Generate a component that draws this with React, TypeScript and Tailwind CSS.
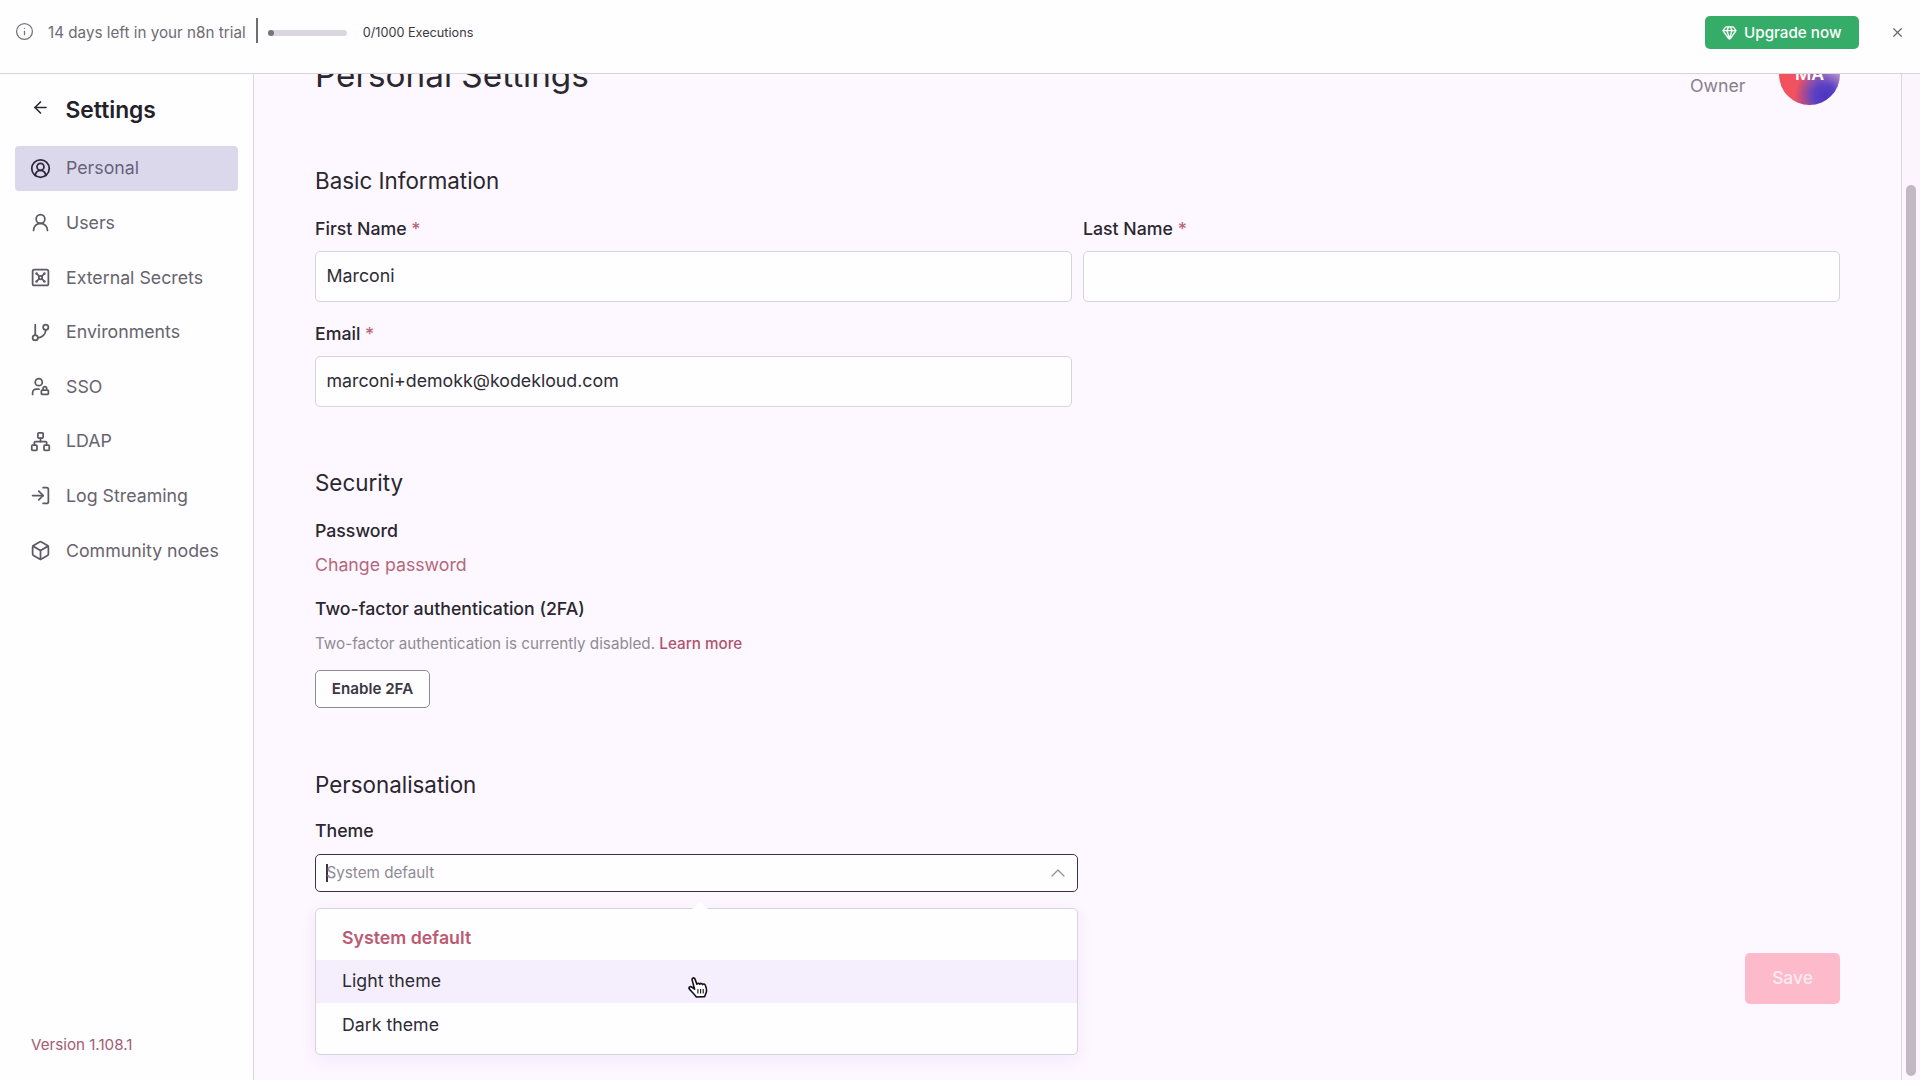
import { useState } from "react";
import {
  ArrowLeft,
  Box,
  CircleUserRound,
  Gem,
  GitBranch,
  Info,
  LogIn,
  Network,
  UserRound,
  Vault,
  X,
  type LucideIcon,
} from "lucide-react";
import clsx from "clsx";

type NavItem = {
  label: string;
  icon: LucideIcon | typeof UserLockIcon;
};

function UserLockIcon({ className }: { className?: string }) {
  return (
    <svg
      viewBox="0 0 24 24"
      fill="none"
      stroke="currentColor"
      strokeWidth={2}
      strokeLinecap="round"
      strokeLinejoin="round"
      className={className}
    >
      <circle cx="10" cy="7" r="4" />
      <path d="M10.3 15H7a4 4 0 0 0-4 4v2" />
      <path d="M15 15.5V14a2 2 0 0 1 4 0v1.5" />
      <rect width="8" height="5" x="13" y="16" rx=".899" />
    </svg>
  );
}

function HandCursor({ className }: { className?: string }) {
  return (
    <svg viewBox="0 0 20 22" className={className}>
      <path
        d="M6.6 13.2 L4.2 4.1 C3.7 1.9 6.2 1 7 3.1 L8.9 8.2 C9.4 6.9 11.2 7 11.6 8.2 C12.4 7 14.1 7.2 14.5 8.6 C15.4 7.6 17 8 17.4 9.4 C18.3 12 19.4 14.6 18 17 L16.6 20.6 L8.4 21 C6.6 18.4 3.6 15.6 1.4 13.1 C0.2 11.4 2 10 3.6 11 Z"
        fill="#fff"
        stroke="#15101c"
        strokeWidth="1.6"
        strokeLinejoin="round"
      />
      <path
        d="M9.9 13v4.4M12.6 13v4.4M15.2 13v4.4"
        stroke="#15101c"
        strokeWidth="1.1"
      />
    </svg>
  );
}

const navItems: NavItem[] = [
  { label: "Personal", icon: CircleUserRound },
  { label: "Users", icon: UserRound },
  { label: "External Secrets", icon: Vault },
  { label: "Environments", icon: GitBranch },
  { label: "SSO", icon: UserLockIcon },
  { label: "LDAP", icon: Network },
  { label: "Log Streaming", icon: LogIn },
  { label: "Community nodes", icon: Box },
];

const themes = ["System default", "Light theme", "Dark theme"];

function TrialBanner() {
  return (
    <header className="flex h-[74px] shrink-0 items-start border-b border-[#d9d3dc] bg-[#fefdff] pl-[14.5px] pr-[15px]">
      <div className="flex h-[65px] items-center">
        <Info
          className="-mt-0.5 size-[19px] text-[#757279]"
          strokeWidth={1.6}
        />
        <span className="mt-px ml-[14.5px] text-[15.22px] text-[#6f6c73]">
          14 days left in your n8n trial
        </span>
        <div className="ml-[10px] -mt-1 h-[25px] w-[2px] bg-[#6f6c73]" />
        <div className="ml-[10.5px] h-[6px] w-[79px] rounded-full bg-[#dad7e1]">
          <div className="size-[6px] rounded-full bg-[#77747c]" />
        </div>
        <span className="mt-px ml-[15.5px] text-[12.7px] text-[#3b383f]">
          0/1000 Executions
        </span>
      </div>

      <div className="ml-auto flex h-[65px] items-center">
        <button className="flex h-[33px] w-[154px] items-center rounded-[5px] bg-[#35ad68] pl-[17px] text-[15.2px] font-medium text-white">
          <Gem className="mr-[7px] size-[15px]" strokeWidth={2.2} />
          <span className="mt-px">Upgrade now</span>
        </button>
        <X className="ml-[31px] size-[15px] text-[#6b6870]" strokeWidth={2} />
      </div>
    </header>
  );
}

function Sidebar() {
  const [active] = useState("Personal");

  return (
    <aside className="flex w-[254px] shrink-0 flex-col border-r border-[#dcd6e2] bg-[#fefdff]">
      <div className="mt-[20px] flex h-[32px] items-center pl-[31px]">
        <ArrowLeft
          className="-mt-[5px] size-[19px] text-[#2b2830]"
          strokeWidth={2}
        />
        <h1 className="ml-[15.5px] text-[22.8px] font-semibold text-[#242129]">
          Settings
        </h1>
      </div>

      <nav className="mt-[20px] flex flex-col gap-[10px] px-[15px]">
        {navItems.map(({ label, icon: Icon }) => (
          <a
            key={label}
            className={clsx(
              "flex h-[44.6px] items-center rounded-[4px] pl-[15px]",
              active === label && "bg-[#dcd8ec]"
            )}
          >
            <Icon
              className={clsx(
                "size-[21px]",
                active === label ? "text-[#2c283a]" : "text-[#5d5a61]"
              )}
              strokeWidth={2}
            />
            <span
              className={clsx(
                "mt-px ml-[15px] text-[17.75px]",
                active === label ? "text-[#67637a]" : "text-[#67646b]"
              )}
            >
              {label}
            </span>
          </a>
        ))}
      </nav>

      <a className="mt-auto mb-[25.5px] pl-[31px] text-[15.17px] leading-[20px] text-[#a35c70]">
        Version 1.108.1
      </a>
    </aside>
  );
}

function Label({ text, required }: { text: string; required?: boolean }) {
  return (
    <label className="block text-[17.72px] leading-[20px] font-medium text-[#2a272f]">
      {text}
      {required && <span className="text-[#b9647a]"> *</span>}
    </label>
  );
}

function Field({ label, value }: { label: string; value: string }) {
  return (
    <div className="w-[757px]">
      <Label text={label} required />
      <div className="mt-[12.5px] flex h-[50.5px] items-center rounded-[5px] border border-[#d8d2dd] bg-[#fefdff] pt-px pl-[10.5px] text-[17.77px] text-[#2f2c34]">
        {value}
      </div>
    </div>
  );
}

function SectionTitle({ children }: { children: string }) {
  return (
    <h2 className="text-[22.4px] leading-[28px] text-[#2a272f]">{children}</h2>
  );
}

function ThemeSelect() {
  const [selected] = useState("System default");
  const [hovered] = useState("Light theme");

  return (
    <div className="relative mt-[13px] w-[763px]">
      <div className="flex h-[38px] items-center rounded-[5px] border-[1.5px] border-[#3a3448] bg-[#fefdff] pr-[12px] pl-[10px]">
        <div className="h-[18px] w-[1.5px] bg-[#3a3640]" />
        <span className="-ml-px text-[15.22px] text-[#8f8b93]">{selected}</span>
        <svg
          viewBox="0 0 14 8"
          className="ml-auto h-[8px] w-[14px]"
          fill="none"
          stroke="#929097"
          strokeWidth="1.3"
          strokeLinecap="round"
          strokeLinejoin="round"
        >
          <path d="M1 7 L7 1 L13 7" />
        </svg>
      </div>

      {/* Dropdown */}
      <div className="absolute top-[53.5px] left-0 z-10 h-[147px] w-[763px] rounded-[5px] border border-[#d9d3df] bg-[#fefdff] pt-[8.5px] shadow-[0_4px_16px_rgba(110,60,190,0.08)]">
        <svg
          viewBox="0 0 18 9"
          className="absolute -top-[8px] left-[375px] h-[9px] w-[18px]"
        >
          <path d="M0 9 L8 1.4 Q9 .6 10 1.4 L18 9 Z" fill="#fefdff" />
        </svg>
        <ul>
          {themes.map((theme) => (
            <li
              key={theme}
              className={clsx(
                "flex h-[43.2px] items-center pl-[26px] text-[17.75px]",
                theme === selected
                  ? "font-semibold text-[#bb5a70]"
                  : "text-[#2f2c34]",
                theme === hovered && "bg-[#f5effd]"
              )}
            >
              {theme}
            </li>
          ))}
        </ul>
        <HandCursor className="absolute top-[67px] left-[372px] h-[22px] w-[20px]" />
      </div>
    </div>
  );
}

function PersonalSettings() {
  return (
    <main className="min-w-0 flex-1 overflow-hidden bg-[#fdf7ff] pr-[61px] pl-[61px]">
      {/* Scrolled partly under the banner */}
      <div className="-mt-[30px] flex h-[61px] items-center">
        <h1 className="text-[33.3px] leading-[40px] text-[#2a272f]">
          Personal Settings
        </h1>
        <span className="mt-[22.5px] ml-auto text-[17.75px] leading-[20px] text-[#858189]">
          Owner
        </span>
        <div className="ml-[33.5px] flex size-[61px] items-center justify-center rounded-full bg-[radial-gradient(circle_at_76%_86%,#4b35c0_0%,#5a40c4_16%,transparent_44%),linear-gradient(75deg,#f4505a_0%,#ee5462_38%,#b872a8_60%,#d0a8cc_78%,#d8b4cc_100%)] text-[17.65px] font-semibold text-white">
          MA
        </div>
      </div>

      {/* Basic Information */}
      <section className="mt-[62px]">
        <SectionTitle>Basic Information</SectionTitle>
        <div className="mt-[23.5px] grid grid-cols-[757px_757px] gap-x-[11px] gap-y-[22px]">
          <Field label="First Name" value="Marconi" />
          <Field label="Last Name" value="" />
          <Field label="Email" value="marconi+demokk@kodekloud.com" />
        </div>
      </section>

      {/* Security */}
      <section className="mt-[62.5px]">
        <SectionTitle>Security</SectionTitle>
        <div className="mt-[24px]">
          <Label text="Password" />
        </div>
        <a className="mt-[14px] block text-[17.72px] leading-[20px] text-[#b5687c]">
          Change password
        </a>
        <div className="mt-[24px]">
          <Label text="Two-factor authentication (2FA)" />
        </div>
        <p className="mt-[14.5px] text-[15.23px] leading-[20px] text-[#8f8b93]">
          Two-factor authentication is currently disabled.{" "}
          <a className="font-medium text-[#ad556c]">Learn more</a>
        </p>
        <button className="mt-[16px] flex h-[38px] w-[115px] items-center justify-center rounded-[5px] border border-[#8e8b93] bg-[#fefdff] pt-px text-[15.17px] font-semibold text-[#3a373f]">
          Enable 2FA
        </button>
      </section>

      {/* Personalisation */}
      <section className="mt-[63px]">
        <SectionTitle>Personalisation</SectionTitle>
        <div className="mt-[22.5px]">
          <Label text="Theme" />
        </div>
        <ThemeSelect />
      </section>

      <div className="mt-[61px] flex justify-end">
        <button className="h-[51px] w-[95px] rounded-[5px] bg-[#fdbaca] text-[17.4px] font-medium text-[#fdeaf2]">
          Save
        </button>
      </div>
    </main>
  );
}

export default function App() {
  return (
    <div className="flex h-[1080px] w-[1920px] flex-col overflow-hidden bg-[#fdf7ff] font-['Inter',sans-serif]">
      <TrialBanner />
      <div className="flex min-h-0 flex-1">
        <Sidebar />
        <PersonalSettings />
        {/* Scrollbar */}
        <div className="w-[19px] shrink-0 border-l border-[#dcd4e2] bg-[#fcf5fd] pt-[111px] pl-[4px]">
          <div className="h-[891px] w-[10px] rounded-full bg-[#c2b8c4]" />
        </div>
      </div>
    </div>
  );
}
